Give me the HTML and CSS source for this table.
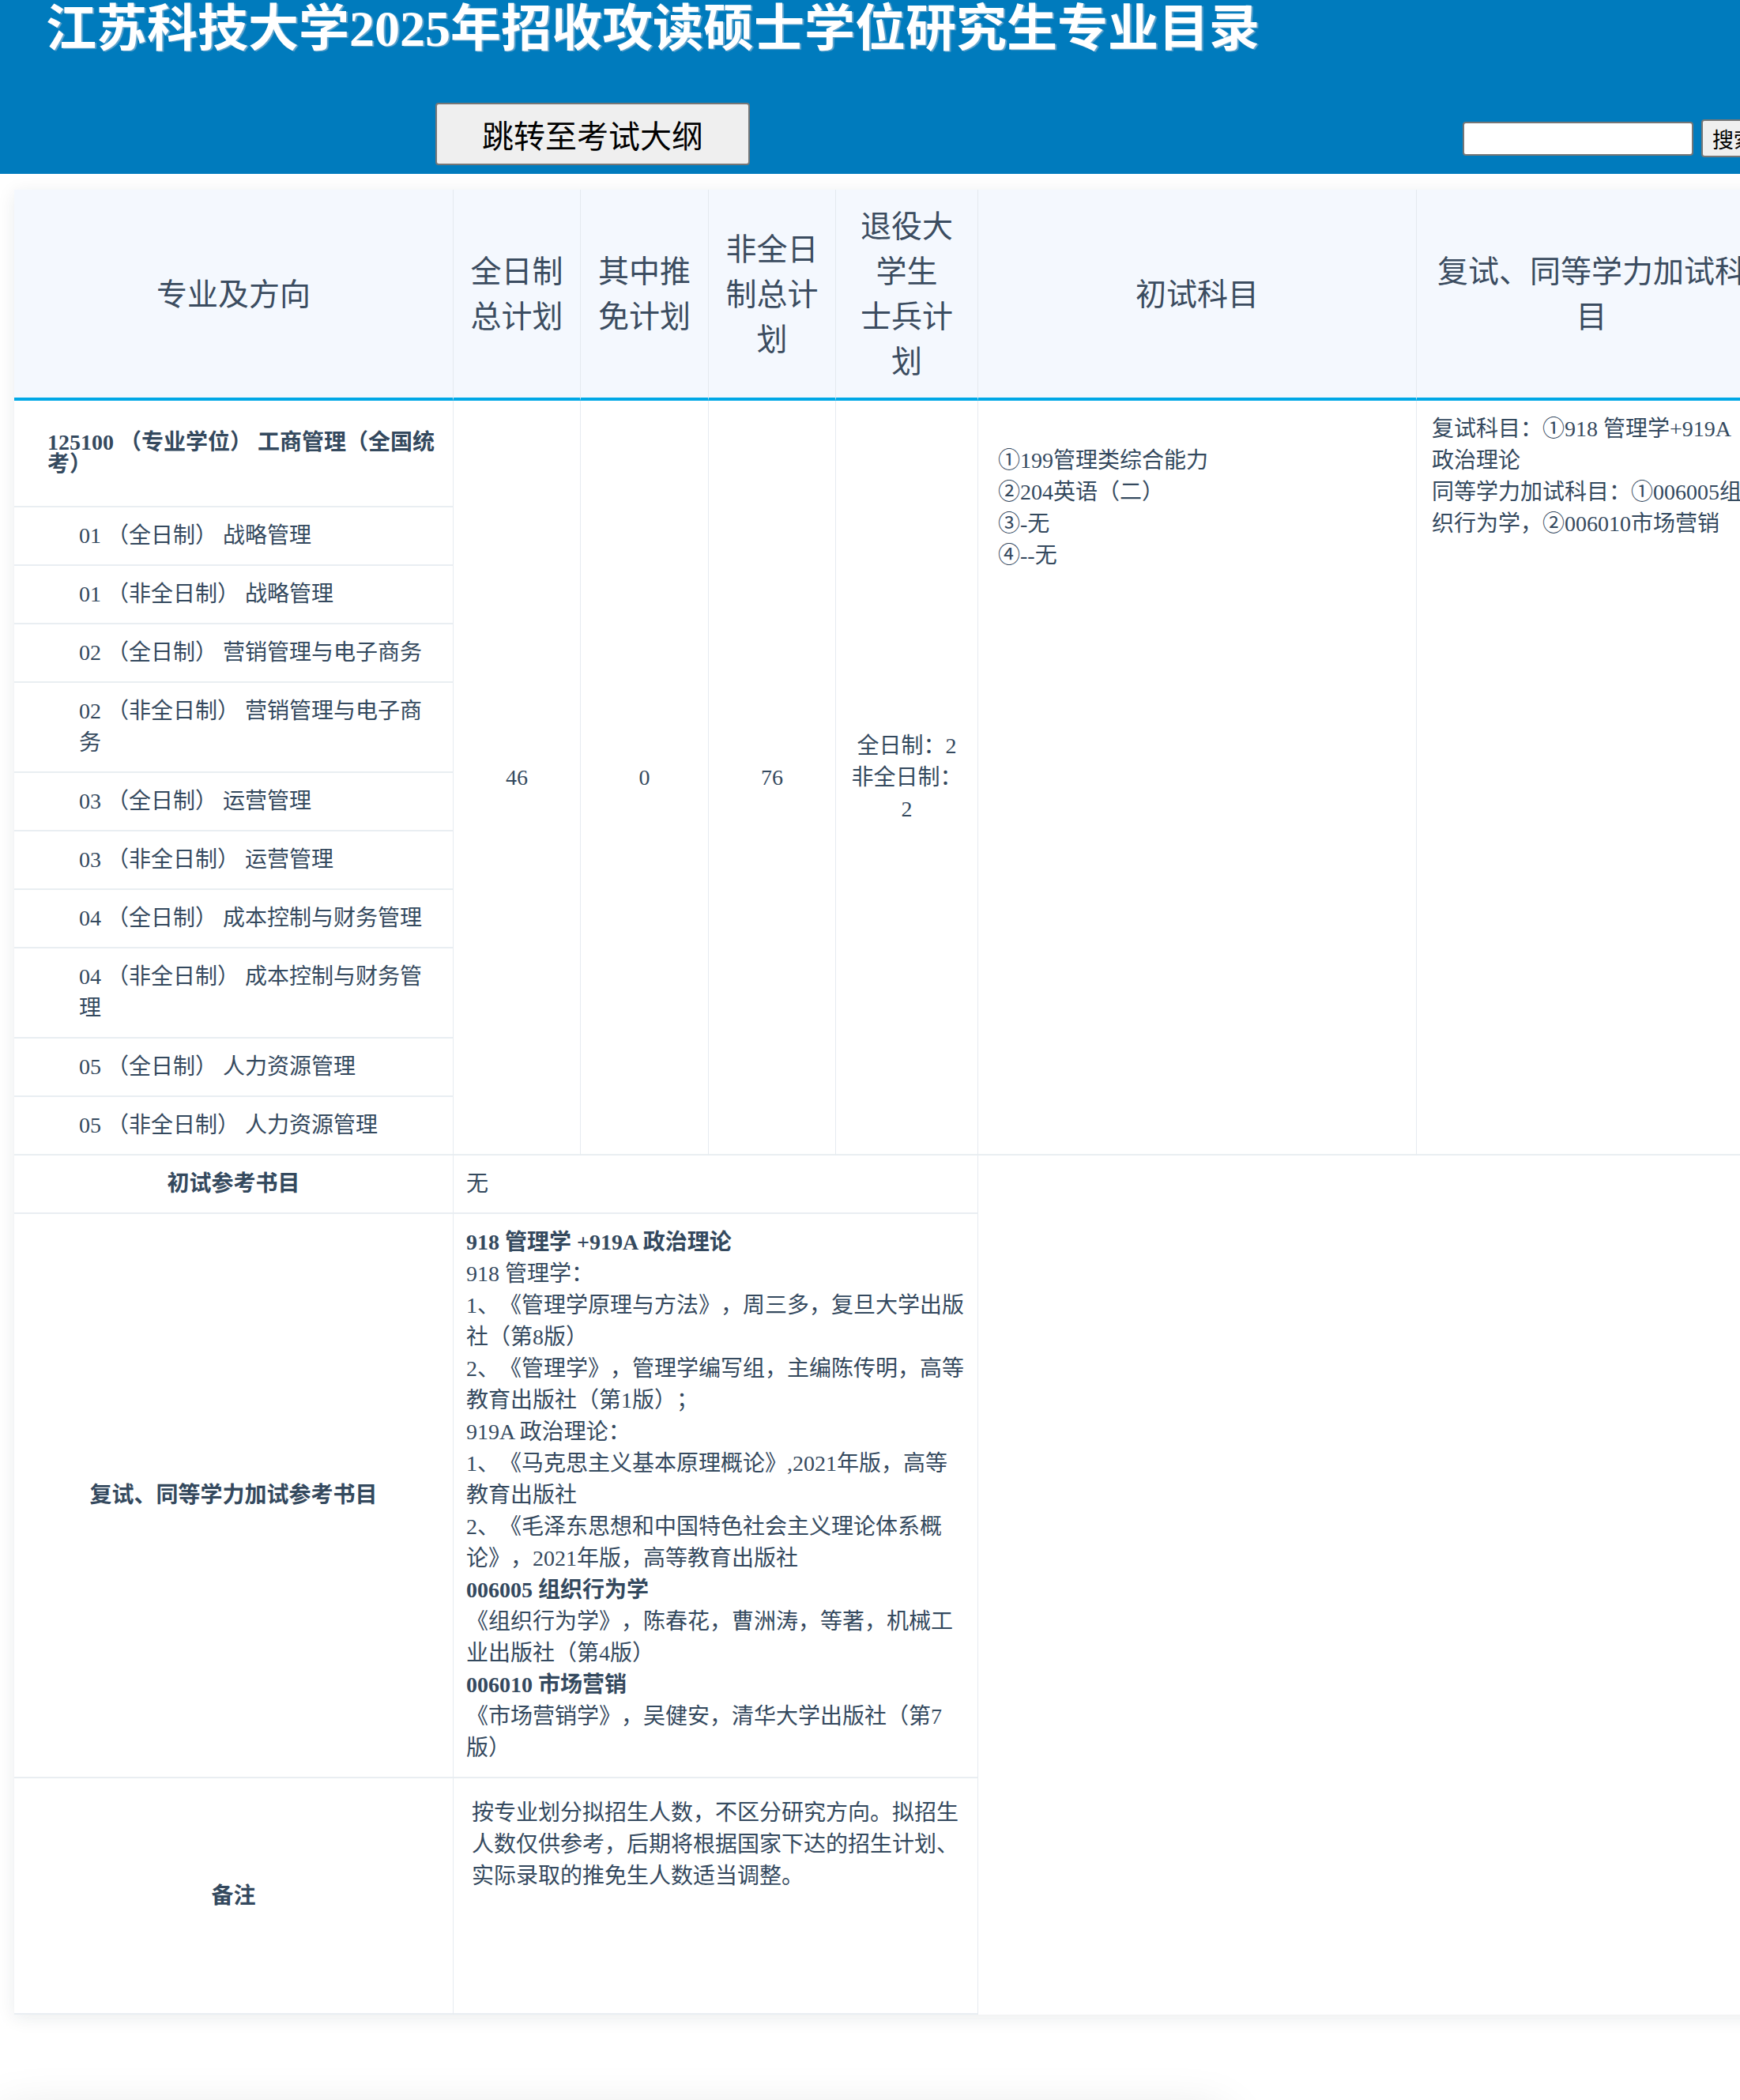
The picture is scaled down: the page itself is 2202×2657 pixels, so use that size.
FILE: index.html
```html
<!DOCTYPE html>
<html lang="zh-CN">
<head>
<meta charset="utf-8">
<title>江苏科技大学2025年招收攻读硕士学位研究生专业目录</title>
<link rel="stylesheet" href="styles.css">
</head>
<body>
<div class="page">
  <header class="top">
    <h1 class="title">江苏科技大学2025年招收攻读硕士学位研究生专业目录</h1>
    <div class="toolbar">
      <button class="jump" type="button">跳转至考试大纲</button>
      <form class="search">
        <input class="search-input" type="text">
        <button class="search-btn" type="button">搜索</button>
      </form>
    </div>
  </header>

  <main class="card">
    <table class="catalog">
      <colgroup>
        <col class="c-major">
        <col class="c-num">
        <col class="c-num2">
        <col class="c-num">
        <col class="c-vet">
        <col class="c-exam">
        <col class="c-retest">
      </colgroup>
      <thead>
        <tr>
          <th>专业及方向</th>
          <th>全日制总计划</th>
          <th>其中推免计划</th>
          <th>非全日制总计划</th>
          <th class="th-vet">退役大学生 士兵计划</th>
          <th>初试科目</th>
          <th class="th-last">复试、同等学力加试科目</th>
        </tr>
      </thead>
      <tbody>
        <tr>
          <td class="major"><b>125100 （专业学位） 工商管理（全国统考）</b></td>
          <td class="num" rowspan="11">46</td>
          <td class="num" rowspan="11">0</td>
          <td class="num" rowspan="11">76</td>
          <td class="vet" rowspan="11">全日制：2<br>非全日制：2</td>
          <td class="exam" rowspan="11">①199管理类综合能力<br>②204英语（二）<br>③-无<br>④--无</td>
          <td class="retest" rowspan="11">复试科目：①918 管理学+919A政治理论<br>同等学力加试科目：①006005组织行为学，②006010市场营销</td>
        </tr>
        <tr><td class="dir">01 （全日制） 战略管理</td></tr>
        <tr><td class="dir">01 （非全日制） 战略管理</td></tr>
        <tr><td class="dir">02 （全日制） 营销管理与电子商务</td></tr>
        <tr><td class="dir">02 （非全日制） 营销管理与电子商务</td></tr>
        <tr><td class="dir">03 （全日制） 运营管理</td></tr>
        <tr><td class="dir">03 （非全日制） 运营管理</td></tr>
        <tr><td class="dir">04 （全日制） 成本控制与财务管理</td></tr>
        <tr><td class="dir">04 （非全日制） 成本控制与财务管理</td></tr>
        <tr><td class="dir">05 （全日制） 人力资源管理</td></tr>
        <tr><td class="dir">05 （非全日制） 人力资源管理</td></tr>
        <tr>
          <td class="label">初试参考书目</td>
          <td class="value" colspan="4">无</td>
        </tr>
        <tr>
          <td class="label">复试、同等学力加试参考书目</td>
          <td class="value" colspan="4"><b>918 管理学 +919A 政治理论</b><br>918 管理学：<br>1、《管理学原理与方法》，周三多，复旦大学出版社（第8版）<br>2、《管理学》，管理学编写组，主编陈传明，高等教育出版社（第1版）；<br>919A 政治理论：<br>1、《马克思主义基本原理概论》,2021年版，高等教育出版社<br>2、《毛泽东思想和中国特色社会主义理论体系概论》，2021年版，高等教育出版社<br><b>006005 组织行为学</b><br>《组织行为学》，陈春花，曹洲涛，等著，机械工业出版社（第4版）<br><b>006010 市场营销</b><br>《市场营销学》，吴健安，清华大学出版社（第7版）</td>
        </tr>
        <tr>
          <td class="label">备注</td>
          <td class="value note" colspan="4">按专业划分拟招生人数，不区分研究方向。拟招生人数仅供参考，后期将根据国家下达的招生计划、实际录取的推免生人数适当调整。</td>
        </tr>
      </tbody>
    </table>
  </main>
  <div class="after"></div>
</div>
</body>
</html>
```

FILE: styles.css
```css
html, body {
  margin: 0;
  padding: 0;
  background: #ffffff;
}

body {
  font-family: "Liberation Serif", "Noto Sans CJK SC", serif;
  color: #34495e;
  overflow: hidden;
  text-spacing-trim: space-all;
}

.page {
  width: 2253px;
}

/* ---------- header ---------- */
.top {
  height: 220px;
  background: #007bbd;
  padding: 0 18px 0 0;
  box-sizing: border-box;
}

.title {
  margin: 0;
  padding: 5px 0 0 58px;
  height: 67px;
  font-family: "Liberation Serif", "Noto Sans CJK SC", serif;
  font-size: 64px;
  line-height: 64px;
  font-weight: bold;
  color: #ffffff;
  text-shadow: 2px 1px 1px rgba(190, 200, 215, 0.55);
  white-space: nowrap;
}

.toolbar {
  display: flex;
  align-items: flex-start;
  margin-top: 58px;
}

.jump {
  margin-left: 551px;
  width: 398px;
  height: 79px;
  padding: 0;
  background: #efefef;
  border: 2px solid #767676;
  border-radius: 4px;
  font-family: "Noto Sans CJK SC", sans-serif;
  font-size: 40px;
  color: #000000;
}

.search {
  margin: 21px 0 0 auto;
  display: flex;
  align-items: center;
  gap: 10px;
}

.search-input {
  width: 292px;
  height: 43px;
  box-sizing: border-box;
  border: 2px solid #767676;
  border-radius: 4px;
  background: #ffffff;
  padding: 0 4px;
}

.search-btn {
  height: 48px;
  padding: 0 12px;
  background: #efefef;
  border: 2px solid #767676;
  border-radius: 4px;
  font-family: "Noto Sans CJK SC", sans-serif;
  font-size: 27px;
  color: #000000;
}

/* ---------- card / table ---------- */
.card {
  display: block;
  margin: 20px 18px 0;
  background: #ffffff;
  box-shadow: 0 4px 22px rgba(20, 40, 60, 0.09);
}

.catalog {
  width: 2217px;
  table-layout: fixed;
  border-collapse: separate;
  border-spacing: 0;
  font-size: 28px;
  line-height: 40px;
  color: #34495e;
}

.c-major { width: 556px; }
.c-num { width: 161px; }
.c-num2 { width: 162px; }
.c-vet { width: 180px; }
.c-exam { width: 555px; }
.c-retest { width: 442px; }

.catalog th {
  background: #f4f8fe;
  font-size: 39px;
  line-height: 57px;
  font-weight: normal;
  color: #3b4c60;
  text-align: center;
  vertical-align: middle;
  padding: 18px 20px 17px;
  border-right: 1px solid #e4e9ef;
  border-bottom: 4px solid #00a8e6;
}

.catalog th.th-vet {
  padding-left: 28px;
  padding-right: 28px;
}

.catalog th.th-last {
  border-right: none;
}

.catalog td {
  padding: 16px;
  border-right: 1px solid #e6ebf0;
  border-bottom: 2px solid #e9eef2;
  vertical-align: middle;
}

.catalog td.major {
  padding: 39px 8px 38px 42px;
  line-height: 28px;
  font-size: 28px;
}

.catalog td.dir {
  padding: 16px 26px 16px 82px;
}

.catalog td.num {
  text-align: center;
}

.catalog td.vet {
  text-align: center;
}

.catalog td.exam {
  vertical-align: top;
  padding: 56px 16px 16px 25px;
}

.catalog td.retest {
  vertical-align: top;
  padding: 16px 20px 16px 19px;
  border-right: none;
}

.catalog td.label {
  text-align: center;
  font-weight: bold;
}

.catalog td.value {
  padding: 16px 12px 16px 16px;
  vertical-align: top;
}

.catalog td.note {
  padding: 24px 16px 153px 23px;
}

.after {
  width: 1550px;
  height: 300px;
  margin-top: 125px;
  background: #ffffff;
  box-shadow: 0 0 60px rgba(0, 0, 0, 0.12);
}
```
